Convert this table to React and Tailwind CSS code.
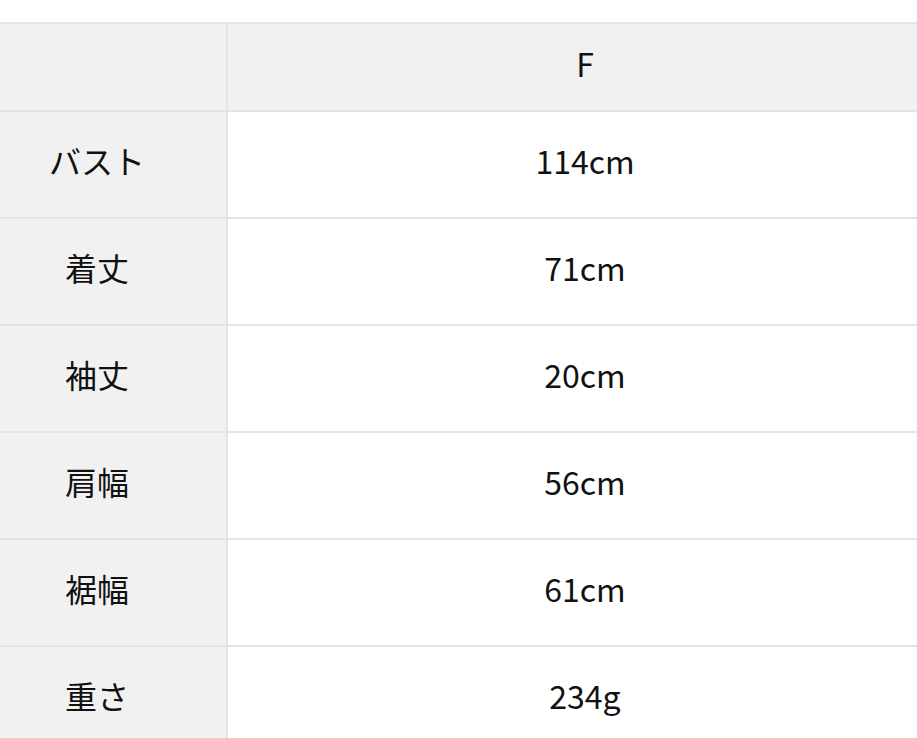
import React from "react";

const rows = [
  ["バスト", "114cm"],
  ["着丈", "71cm"],
  ["袖丈", "20cm"],
  ["肩幅", "56cm"],
  ["裾幅", "61cm"],
  ["重さ", "234g"],
];

const App = () => {
  return (
    <div className="w-[917px] h-[738px] overflow-hidden bg-white pt-[22px] font-['Noto_Sans_CJK_JP','Noto_Sans',sans-serif] text-[#111] text-[32px]">
      <div className="ml-[-32px] w-[974px] border-b-2 border-[#e4e4e4]">
        {/* header */}
        <div className="flex h-[88px] border-t-2 border-[#e4e4e4] bg-[#f1f1f1]">
          <div className="w-[260px] border-r-2 border-[#e4e4e4]"></div>
          <div className="flex-1 flex items-center justify-center pb-[9px]">F</div>
        </div>
        {rows.map(([label, value]) => (
          <div key={label} className="flex h-[107px] border-t-2 border-[#e4e4e4]">
            <div className="w-[260px] border-r-2 border-[#e4e4e4] bg-[#f1f1f1] flex items-center justify-center pb-[9px]">
              {label}
            </div>
            <div className="flex-1 flex items-center justify-center bg-white pb-[9px]">{value}</div>
          </div>
        ))}
      </div>
    </div>
  );
};

export default App;
